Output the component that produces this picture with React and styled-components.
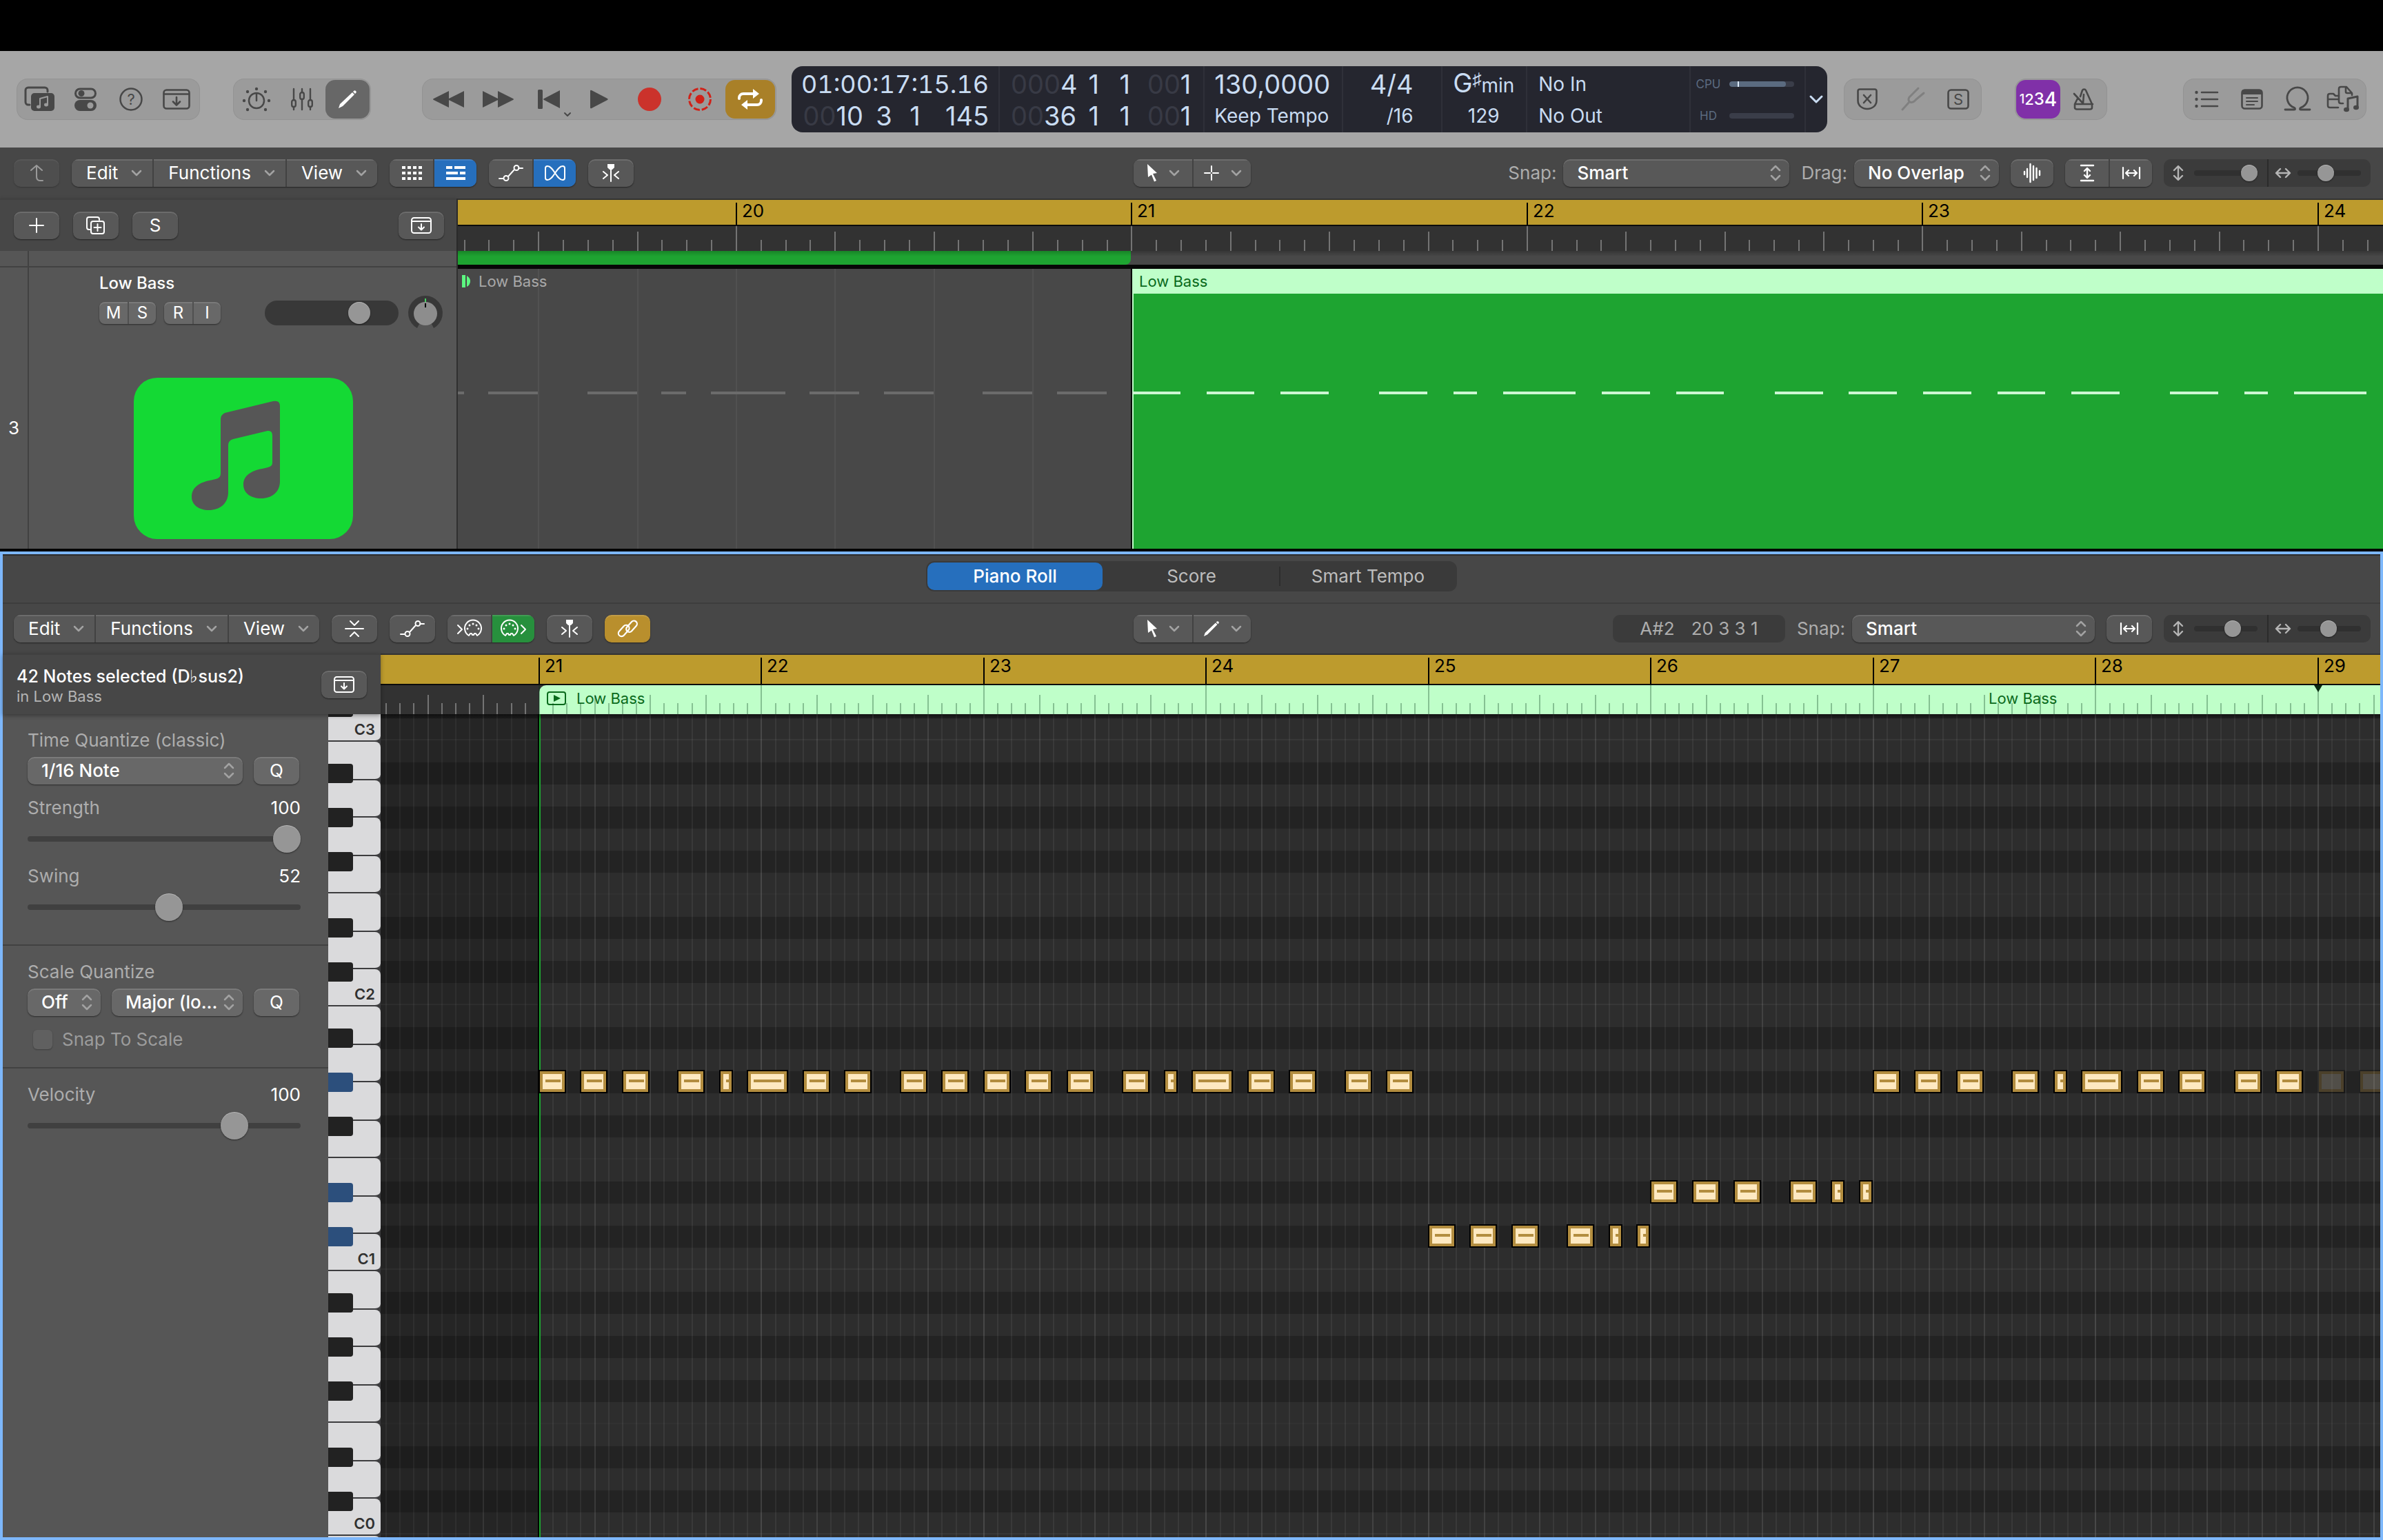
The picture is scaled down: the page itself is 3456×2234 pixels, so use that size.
import React from 'react'
import styled, { createGlobalStyle, css } from 'styled-components'

const GlobalStyle = createGlobalStyle`
*{
    box-sizing: border-box;
}
html, body{
    margin: 0;
    background: #000000;
}
body, button, input, select{
    font-family: Inter, 'Liberation Sans', sans-serif;
    font-size: 26px;
    line-height: 32px;
}
button, select, input{
    margin: 0;
    padding: 0;
    border: none;
    color: inherit;
}
`

/* ---------- song data, positions counted in sixteenths from bar 21 ---------- */

const RIFF = [
  [0, 2], [3, 2], [6, 2], [10, 2], [13, 1], [15, 3], [19, 2], [22, 2], [26, 2], [29, 2],
  [32, 2], [35, 2], [38, 2], [42, 2], [45, 1], [47, 3], [51, 2], [54, 2], [58, 2], [61, 2],
]
const TURN = [[0, 2], [3, 2], [6, 2], [10, 2], [13, 1], [15, 1]]

const shift = (list, by) => list.map(([start, length]) => [start + by, length])

const ROW = 32
const OCTAVE = 384
const SCROLL = 346
const rowTop = (octave, step) => (3 - octave) * OCTAVE + (11 - step) * ROW

const NOTES = [
  { top: rowTop(1, 8), items: [...RIFF, ...shift(RIFF.slice(0, 10), 96)] },
  { top: rowTop(1, 1), items: shift(TURN, 64) },
  { top: rowTop(1, 3), items: shift(TURN, 80) },
  { top: rowTop(1, 8), muted: true, items: shift(RIFF.slice(0, 2), 128) },
]

const TRACK_VIEW = { origin: 976.4, bar: 573.5, from: -27, to: 51 }
const ROLL_VIEW = { origin: 228.9, bar: 322.5, from: -11, to: 132 }

const at = (view, sixteenth) => Math.round(view.origin + (sixteenth * view.bar) / 16)
const range = (from, to) => Array.from({ length: to - from + 1 }, (_, i) => from + i)

/* ---------- icons ---------- */

const Svg = styled.svg`
display: block;
flex: none;
fill: none;
stroke: currentColor;
stroke-width: ${p => p.$weight || 2};
stroke-linecap: round;
stroke-linejoin: round;
overflow: visible;
text{
    fill: currentColor;
    stroke: none;
    font-size: 22px;
    text-anchor: middle;
}
.solid{
    fill: currentColor;
    stroke: none;
}
`

const Icon = ({ w, h, weight, children }) => (
  <Svg width={w} height={h} viewBox={`0 0 ${w} ${h}`} $weight={weight} aria-hidden="true">{children}</Svg>
)

const LibraryIcon = () => (
  <Icon w={44} h={36} weight={3}>
    <path d="M7 26H5a4 4 0 0 1-4-4V5a4 4 0 0 1 4-4h24a4 4 0 0 1 4 4v2" />
    <rect className="solid" x="9" y="9" width="34" height="26" rx="5" />
    <path d="M22 29V17l11-3v12" stroke="#9b9b9b" strokeWidth="2" />
    <ellipse cx="20" cy="29" rx="3" ry="2.4" fill="#9b9b9b" stroke="none" />
    <ellipse cx="31" cy="26" rx="3" ry="2.4" fill="#9b9b9b" stroke="none" />
  </Icon>
)
const InspectorIcon = () => (
  <Icon w={32} h={34} weight={3}>
    <rect x="1.5" y="2" width="29" height="13" rx="6.5" />
    <circle className="solid" cx="10" cy="8.5" r="4.5" />
    <rect className="solid" x="0" y="18" width="32" height="16" rx="8" />
    <circle cx="23" cy="26" r="4.5" fill="#9b9b9b" stroke="none" />
  </Icon>
)
const HelpIcon = () => (
  <Icon w={34} h={34} weight={2.5}>
    <circle cx="17" cy="17" r="15.5" />
    <text x="17" y="25">?</text>
  </Icon>
)
const TrayIcon = () => (
  <Icon w={40} h={30} weight={2.6}>
    <rect x="1.5" y="1.5" width="37" height="27" rx="4" />
    <path d="M2 7.5h36M20 12v11M15 18.5l5 5 5-5" />
  </Icon>
)
const TrayDownIcon = () => (
  <Icon w={30} h={24}>
    <rect x="1" y="1" width="28" height="22" rx="3.5" />
    <path d="M1 6h28M15 10v8M11 14.5l4 4 4-4" />
  </Icon>
)
const DialIcon = () => (
  <Icon w={40} h={34} weight={2.5}>
    <circle cx="20" cy="19" r="11" />
    <path d="M20 9v10" />
    {[[20, 2], [7, 6], [33, 6], [2, 19], [38, 19], [7, 32], [33, 32]].map(([x, y]) => (
      <circle key={`${x}-${y}`} className="solid" cx={x} cy={y} r="2.2" />
    ))}
  </Icon>
)
const MixerIcon = () => (
  <Icon w={32} h={32} weight={2.4}>
    <path d="M4 1v16M4 27v4M16 1v5M16 16v15M28 1v16M28 27v4" />
    <rect x="1.2" y="17" width="5.6" height="10" rx="2.8" />
    <rect x="13.2" y="6" width="5.6" height="10" rx="2.8" />
    <rect x="25.2" y="17" width="5.6" height="10" rx="2.8" />
  </Icon>
)
const PencilIcon = ({ size = 26 }) => (
  <Svg width={size} height={size} viewBox="0 0 26 26" aria-hidden="true">
    <path className="solid" d="M0 26l2-6L20 3l3 3L6 23zM21 2l1-1c1-1 2-1 3 0s1 2 0 3l-1 1z" />
  </Svg>
)
const RewindIcon = () => (
  <Icon w={46} h={26}><path className="solid" d="M24 1v24L2 14q-2-1 0-2zM46 1v24L24 14q-2-1 0-2z" /></Icon>
)
const ForwardIcon = () => (
  <Icon w={46} h={26}><path className="solid" d="M0 1v24l22-11q2-1 0-2zM22 1v24l22-11q2-1 0-2z" /></Icon>
)
const ToStartIcon = () => (
  <Icon w={32} h={28}>
    <path className="solid" d="M0 1.5Q0 0 1.5 0h4Q7 0 7 1.5v25Q7 28 5.5 28h-4Q0 28 0 26.5zM32 1v26L9 15q-2-1 0-2z" />
    <path d="M39 34l4 4 4-4" />
  </Icon>
)
const PlayIcon = () => (
  <Icon w={26} h={28}><path className="solid" d="M0 2Q0 0 2 1l23 12q1.5 1 0 2L2 27q-2 1-2-1z" /></Icon>
)
const RecordIcon = () => (
  <Icon w={34} h={34}><circle cx="17" cy="17" r="17" fill="#cb322b" stroke="none" /></Icon>
)
const CaptureIcon = () => (
  <Icon w={34} h={34}>
    <circle cx="17" cy="17" r="15.5" stroke="#d02118" strokeWidth="3" strokeLinecap="butt" strokeDasharray="9.17 3" />
    <circle cx="17" cy="17" r="6.5" fill="#d02118" stroke="none" />
  </Icon>
)
const CycleIcon = () => (
  <Icon w={36} h={30} weight={4}>
    <path d="M2 14v-1a6 6 0 0 1 6-6h16M34 16v1a6 6 0 0 1-6 6H12" />
    <path className="solid" d="M22 0l9 7-9 7zM14 16l-9 7 9 7z" />
  </Icon>
)
const ShieldIcon = () => (
  <Icon w={30} h={32} weight={2.6}>
    <path d="M4 1.5h22a2.5 2.5 0 0 1 2.5 2.5v14c0 7-6 12-13.5 12S1.5 25 1.5 18V4A2.5 2.5 0 0 1 4 1.5zM10 10l10 11M20 10L10 21" />
  </Icon>
)
const ForkIcon = () => (
  <Icon w={36} h={34} weight={3}>
    <path d="M26 1L13 14c-2 3-1 6 1 7 3 1 6 0 8-3L34 8M12 22L3 32" />
  </Icon>
)
const SoloIcon = () => (
  <Icon w={32} h={30} weight={2.6}>
    <rect x="1.5" y="1.5" width="29" height="27" rx="4" />
    <text x="16" y="23">S</text>
  </Icon>
)
const MetronomeIcon = () => (
  <Icon w={32} h={32} weight={2.6}>
    <path d="M11 12l3-9c1-2 4-2 5 0l9 20v5q0 2.5-3 2.5H6Q3 30.5 3 28v-5l4-8M3 23h26M2 8l13 14 1-13" />
  </Icon>
)
const ListIcon = () => (
  <Icon w={34} h={24} weight={2.6}>
    <path d="M10 2h23M10 12h23M10 22h23" />
    <circle className="solid" cx="2.5" cy="2" r="2.2" />
    <circle className="solid" cx="2.5" cy="12" r="2.2" />
    <circle className="solid" cx="2.5" cy="22" r="2.2" />
  </Icon>
)
const NotepadIcon = () => (
  <Icon w={32} h={30} weight={2.6}>
    <rect x="1.5" y="1.5" width="29" height="27" rx="4" />
    <path className="solid" d="M1 8V4q0-3 4-3h22q4 0 4 3v4z" />
    <path d="M8 13h16M8 18h16M8 23h11" strokeWidth="2" />
  </Icon>
)
const LoopIcon = () => (
  <Icon w={38} h={34} weight={2.8}>
    <path d="M1 32h13M24 32h13M14 32c2 0 2-2 0-3A15 15 0 1 1 24 29c-2 1-2 3 0 3" />
  </Icon>
)
const MediaIcon = () => (
  <Icon w={46} h={38} weight={2.6}>
    <path d="M16 31H4q-3 0-3-3V14q0-3 3-3h5l3 3h5M1 19h15" />
    <path d="M17 22V4q0-3 3-3h8l8 9v3M27 2v6q0 2 2 2h6M17 22q0 3 3 3h3" />
    <path d="M30 33V18l14-3v15" strokeWidth="3" />
    <ellipse className="solid" cx="28" cy="34" rx="4" ry="3.2" />
    <ellipse className="solid" cx="42" cy="31" rx="4" ry="3.2" />
  </Icon>
)
const ChevronIcon = () => <Icon w={14} h={8} weight={2.5}><path d="M1 1l6 6 6-6" /></Icon>
const LcdChevronIcon = () => <Icon w={18} h={10} weight={3}><path d="M1 1l8 8 8-8" /></Icon>
const StepperIcon = () => <Icon w={14} h={22} weight={2.5}><path d="M1 7l6-6 6 6M1 15l6 6 6-6" /></Icon>
const UpIcon = () => <Icon w={20} h={24}><path d="M2 8l8-7 8 7M10 1v16q0 6 5 6h4" /></Icon>
const GridIcon = () => (
  <Icon w={28} h={20}>
    {[0, 8, 16].map(y => [0, 8, 16, 24].map(x => (
      <rect key={`${x}-${y}`} className="solid" x={x} y={y} width="5" height="4" />
    )))}
  </Icon>
)
const LanesIcon = () => (
  <Icon w={28} h={20}>
    <path className="solid" d="M0 0h9v4H0zM12 0h16v4H12zM0 8h17v4H0zM20 8h8v4h-8zM0 16h28v4H0z" />
  </Icon>
)
const AutomationIcon = () => (
  <Icon w={34} h={22}>
    <path d="M0 19h6M13 16L22 6M28 4h6" />
    <circle cx="10" cy="18.5" r="3.5" />
    <circle cx="25" cy="3.5" r="3.5" />
  </Icon>
)
const FlexIcon = () => (
  <Icon w={30} h={22}>
    <path d="M4 1C13 1 17 21 26 21q3 0 3-3V4q0-3-3-3C17 1 13 21 4 21q-3 0-3-3V4q0-3 3-3z" />
  </Icon>
)
const CatchIcon = () => (
  <Icon w={26} h={26}>
    <path className="solid" d="M8 0h10v5l-3 3h-4l-3-3z" />
    <path d="M13 7v18M2 11l6 5-6 5M24 11l-6 5 6 5" />
  </Icon>
)
const PointerIcon = () => (
  <Icon w={16} h={26}><path className="solid" d="M0 0l14 13-6 1 5 10-3 1.5-4-10L1 19z" /></Icon>
)
const CrossIcon = () => <Icon w={22} h={22}><path d="M11 1v8M11 13v8M1 11h8M13 11h8" /></Icon>
const WaveIcon = () => (
  <Icon w={26} h={28} weight={2.4}><path d="M2 12v4M6 8v12M10.5 1v26M15 4v20M19.5 7v14M24 11v6" /></Icon>
)
const FitHeightIcon = () => (
  <Icon w={20} h={24} weight={2.4}><path d="M1 1h18M1 23h18M10 6v12M6 9l4-4 4 4M6 15l4 4 4-4" /></Icon>
)
const FitWidthIcon = () => (
  <Icon w={26} h={18} weight={2.2}><path d="M1 1v16M25 1v16M6 9h14M9 5L5 9l4 4M17 5l4 4-4 4" /></Icon>
)
const UpDownIcon = () => (
  <Icon w={14} h={22} weight={2.4}><path d="M7 2v18M1 7l6-6 6 6M1 15l6 6 6-6" /></Icon>
)
const LeftRightIcon = () => (
  <Icon w={22} h={14} weight={2.4}><path d="M2 7h18M7 1L1 7l6 6M15 1l6 6-6 6" /></Icon>
)
const PlusIcon = () => <Icon w={20} h={20}><path d="M10 0v20M0 10h20" /></Icon>
const DuplicateIcon = () => (
  <Icon w={28} h={26}>
    <path d="M6 19H4q-3 0-3-3V4q0-3 3-3h12q3 0 3 3v1" />
    <rect x="7" y="7" width="19" height="18" rx="3" />
    <path d="M16.5 11v10M11.5 16h10" />
  </Icon>
)
const CollapseIcon = () => (
  <Icon w={26} h={24}><path d="M7 1l6 6 6-6M0 12h26M7 23l6-6 6 6" /></Icon>
)
const MidiPlug = ({ x }) => (
  <>
    <path d={`M${x + 7} 22a12 12 0 1 1 12 0l-2-3h-2l-1 2h-2l-1-2h-2z`} />
    {[[5, 12], [8, 7], [13, 5], [18, 7], [21, 12]].map(([cx, cy]) => (
      <circle key={cx} className="solid" cx={x + cx} cy={cy} r="1.5" />
    ))}
  </>
)
const MidiInIcon = () => (
  <Icon w={38} h={24}><MidiPlug x={11} /><path d="M2 7l6 6-6 6" /></Icon>
)
const MidiOutIcon = () => (
  <Icon w={38} h={24}><MidiPlug x={0} /><path d="M30 7l6 6-6 6" /></Icon>
)
const LinkIcon = () => (
  <Icon w={28} h={28} weight={2.2}>
    <rect x="-1" y="13" width="19" height="9" rx="4.5" transform="rotate(-48 8 17)" />
    <rect x="10" y="6" width="19" height="9" rx="4.5" transform="rotate(-48 20 10)" />
  </Icon>
)
const RegionPlayIcon = () => (
  <Icon w={28} h={20}>
    <rect x="1" y="1" width="26" height="18" rx="3" />
    <path className="solid" d="M10 5l10 5-10 5z" />
  </Icon>
)
const PanKnob = () => (
  <Icon w={50} h={50}>
    <path d="M13 47A25 25 0 1 1 37 47L33 39H17z" fill="#383838" stroke="none" />
    <circle cx="25" cy="26" r="17" fill="#8d8d8d" stroke="none" />
    <path d="M25 4v5" stroke="#45d463" strokeLinecap="butt" />
    <path d="M25 11v6" stroke="#000000" strokeLinecap="butt" />
  </Icon>
)
const MutedMark = () => (
  <Icon w={12} h={18}>
    <path d="M0 0h5v18H0zM7 1q5 3 5 8t-5 8z" fill="#5cf780" stroke="none" />
  </Icon>
)

/* ---------- shared controls ---------- */

const raised = css`
box-shadow: inset 0 2px 0 rgba(255, 255, 255, 0.12), 0 1px 2px rgba(0, 0, 0, 0.5);
`

const Tool = styled.button`
display: flex;
align-items: center;
justify-content: center;
flex: none;
gap: ${p => p.$gap || 0}px;
width: ${p => p.$width || 66}px;
height: 40px;
border-radius: 10px;
color: #ffffff;
background: ${p => p.$fill || '#585858'};
opacity: ${p => (p.disabled ? 0.45 : 1)};
${raised}
`

const Segments = styled.div`
display: flex;
flex: none;
border-radius: 10px;
overflow: hidden;
background: #585858;
${raised}
${Tool}{
    border-radius: 0;
    box-shadow: inset 0 2px 0 rgba(255, 255, 255, 0.12);
}
${Tool} + ${Tool}{
    border-left: 2px solid #424242;
}
`

const Chevron = styled.span`
display: flex;
color: #a2a2a2;
`

const MenuTool = styled(Tool)`
width: auto;
gap: 20px;
padding: 0 16px 0 21px;
justify-content: space-between;
`

const SelectBox = styled.span`
position: relative;
display: block;
flex: none;
width: ${p => p.$width}px;
height: 40px;
border-radius: 10px;
color: #a2a2a2;
background: ${p => (p.$light ? '#686868' : '#585858')};
${raised}
select{
    appearance: none;
    display: block;
    width: 100%;
    height: 40px;
    padding: 0 32px 0 20px;
    background: none;
    color: #ffffff;
    font-weight: 500;
}
svg{
    position: absolute;
    right: 13px;
    top: 9px;
    pointer-events: none;
}
`

const FieldLabel = styled.label`
color: #adadad;
`

const Slider = styled.input.attrs({ type: 'range' })`
appearance: none;
display: block;
width: ${p => p.$width || '100%'};
height: ${p => p.$knob}px;
background: none;
&::-webkit-slider-runnable-track{
    height: 8px;
    border-radius: 4px;
    background: ${p => p.$track || '#404040'};
}
&::-webkit-slider-thumb{
    appearance: none;
    width: ${p => p.$knob}px;
    height: ${p => p.$knob}px;
    margin-top: ${p => (8 - p.$knob) / 2}px;
    border-radius: 50%;
    background: #969696;
    box-shadow: inset 0 1px 0 rgba(255, 255, 255, 0.3), 0 1px 2px rgba(0, 0, 0, 0.5);
}
`

const Zoom = styled.div`
display: flex;
align-items: center;
height: 40px;
border-radius: 10px;
background: #3b3b3b;
color: #b5b5b5;
`

const ZoomAxis = styled.label`
display: flex;
align-items: center;
justify-content: space-between;
width: 150px;
height: 40px;
padding: 0 14px;
& + &{
    border-left: 2px solid #2b2b2b;
    padding-left: 10px;
}
`

const Select = ({ id, width, light, label, children }) => (
  <SelectBox $width={width} $light={light}>
    <select id={id} aria-label={label}><option>{children}</option></select>
    <StepperIcon />
  </SelectBox>
)

const Menus = () => (
  <Segments>
    {['Edit', 'Functions', 'View'].map(name => (
      <MenuTool key={name}>{name}<Chevron><ChevronIcon /></Chevron></MenuTool>
    ))}
  </Segments>
)

const ToolPicker = ({ second }) => (
  <Segments>
    <Tool $width={85} $gap={16} aria-label="Left-click tool"><PointerIcon /><Chevron><ChevronIcon /></Chevron></Tool>
    <Tool $width={85} $gap={18} aria-label="Command-click tool">{second}<Chevron><ChevronIcon /></Chevron></Tool>
  </Segments>
)

const ZoomSliders = ({ vertical, horizontal }) => (
  <Zoom>
    <ZoomAxis><UpDownIcon /><Slider $knob={24} $width="92px" $track="#303030" aria-label="Vertical zoom" defaultValue={vertical} /></ZoomAxis>
    <ZoomAxis><LeftRightIcon /><Slider $knob={24} $width="92px" $track="#303030" aria-label="Horizontal zoom" defaultValue={horizontal} /></ZoomAxis>
  </Zoom>
)

/* ---------- control bar ---------- */

const Page = styled.div`
display: flex;
flex-direction: column;
height: 100vh;
overflow: hidden;
background: #000000;
color: #ffffff;
`

const MenuBarGap = styled.div`
flex: none;
height: 74px;
`

const ControlBar = styled.header`
display: flex;
align-items: center;
flex: none;
height: 140px;
padding: 0 24px;
background: #a6a6a6;
color: #484848;
`

const Cluster = styled.div`
display: flex;
gap: ${p => p.$gap || 2}px;
flex: none;
padding: 2px;
height: 60px;
border-radius: 16px;
background: #9b9b9b;
box-shadow: inset 0 0 0 1px rgba(0, 0, 0, 0.05);
margin-left: ${p => p.$before || 0}px;
`

const Push = styled.div`
flex: none;
margin-left: auto;
`

const BarButton = styled.button`
display: flex;
align-items: center;
justify-content: center;
width: ${p => p.$width || 64}px;
height: 56px;
border-radius: 14px;
background: ${p => p.$fill || 'none'};
color: ${p => (p.$fill ? '#ffffff' : p.$faint ? '#808080' : '#484848')};
`

const CountIn = styled.span`
display: flex;
align-items: center;
font-weight: 500;
font-size: 18px;
b{
    font-weight: 500;
    font-size: 22px;
}
i{
    font-style: normal;
    font-size: 24px;
}
strong{
    font-weight: 500;
    font-size: 28px;
}
`

const Lcd = styled.section`
display: grid;
grid-template-columns: 297fr 298fr 201fr 145fr 123fr 237fr 168fr 33fr;
flex: 1;
height: 96px;
margin: 0 24px 0 22px;
border-radius: 16px;
background: #25262f;
color: #c9dcf2;
`

const LcdCell = styled.div`
display: grid;
grid-template-rows: 46px 46px;
align-items: center;
justify-items: ${p => p.$align || 'start'};
padding: 3px ${p => p.$pad || 0}px 0;
line-height: 46px;
white-space: nowrap;
& + &{
    box-shadow: inset 2px 0 0 #2f3039;
}
`

const LcdToggle = styled.button`
display: flex;
align-items: center;
justify-content: center;
background: none;
box-shadow: inset 2px 0 0 #2f3039;
`

const Digits = styled.span`
font-size: 38px;
`

const Clock = styled.span`
font-size: 36px;
font-variant-numeric: tabular-nums;
`

const LcdText = styled.span`
font-size: 28px;
padding-left: ${p => (p.$shift ? 24 : 0)}px;
sup{
    font-size: 26px;
    line-height: 0;
}
`

const Position = styled.div`
display: grid;
grid-template-columns: 90px 60px 30px 1fr;
width: 100%;
font-size: 38px;
text-align: center;
span:first-child{
    text-align: right;
}
span:last-child{
    text-align: right;
}
em{
    font-style: normal;
    color: #383a45;
}
`

const Load = styled.div`
display: grid;
grid-template-columns: 36px 94px;
align-items: center;
gap: 12px;
font-size: 17px;
color: #5c6b80;
text-align: center;
`

const Meter = styled.div`
height: 8px;
border-radius: 4px;
overflow: hidden;
background: #3a3d49;
`

const MeterFill = styled.div`
height: 8px;
border-radius: 4px;
background: linear-gradient(90deg, #5b6b80 12px, #dbe9f7 12px, #dbe9f7 14px, #5b6b80 14px);
`

const SongPosition = ({ bar, beat, division, tick }) => (
  <Position>
    <span><em>{bar[0]}</em>{bar[1]}</span>
    <span>{beat}</span>
    <span>{division}</span>
    <span><em>{tick[0]}</em>{tick[1]}</span>
  </Position>
)

const Controls = () => (
  <ControlBar>
    <Cluster>
      <BarButton aria-label="Library"><LibraryIcon /></BarButton>
      <BarButton aria-label="Inspector"><InspectorIcon /></BarButton>
      <BarButton aria-label="Quick Help"><HelpIcon /></BarButton>
      <BarButton aria-label="Toolbar"><TrayIcon /></BarButton>
    </Cluster>
    <Cluster $before={48}>
      <BarButton aria-label="Smart Controls"><DialIcon /></BarButton>
      <BarButton aria-label="Mixer"><MixerIcon /></BarButton>
      <BarButton aria-label="Editors" $fill="#676767"><PencilIcon /></BarButton>
    </Cluster>
    <Cluster $before={74} $gap={1}>
      <BarButton $width={72} aria-label="Rewind"><RewindIcon /></BarButton>
      <BarButton $width={72} aria-label="Forward"><ForwardIcon /></BarButton>
      <BarButton $width={72} aria-label="Go to Beginning"><ToStartIcon /></BarButton>
      <BarButton $width={72} aria-label="Play"><PlayIcon /></BarButton>
      <BarButton $width={72} aria-label="Record"><RecordIcon /></BarButton>
      <BarButton $width={72} aria-label="Capture Recording"><CaptureIcon /></BarButton>
      <BarButton $width={72} aria-label="Cycle" $fill="#a98028"><CycleIcon /></BarButton>
    </Cluster>

    <Lcd>
      <LcdCell $pad={14}>
        <Clock>01:00:17:15.16</Clock>
        <SongPosition bar={['00', '10']} beat="3" division="1" tick={['', '145']} />
      </LcdCell>
      <LcdCell $pad={18}>
        <SongPosition bar={['000', '4']} beat="1" division="1" tick={['00', '1']} />
        <SongPosition bar={['00', '36']} beat="1" division="1" tick={['00', '1']} />
      </LcdCell>
      <LcdCell $pad={16}>
        <Digits>130,0000</Digits>
        <LcdText>Keep Tempo</LcdText>
      </LcdCell>
      <LcdCell $align="center">
        <Digits>4/4</Digits>
        <LcdText $shift>/16</LcdText>
      </LcdCell>
      <LcdCell $align="center">
        <LcdText><Digits>G</Digits><sup>♯</sup>min</LcdText>
        <LcdText>129</LcdText>
      </LcdCell>
      <LcdCell $pad={18}>
        <LcdText>No In</LcdText>
        <LcdText>No Out</LcdText>
      </LcdCell>
      <LcdCell $pad={10}>
        <Load>CPU<Meter><MeterFill style={{ width: '88%' }} /></Meter></Load>
        <Load>HD<Meter /></Load>
      </LcdCell>
      <LcdToggle aria-label="Display mode"><LcdChevronIcon /></LcdToggle>
    </Lcd>

    <Cluster>
      <BarButton aria-label="Replace"><ShieldIcon /></BarButton>
      <BarButton aria-label="Tuner" $faint><ForkIcon /></BarButton>
      <BarButton aria-label="Solo"><SoloIcon /></BarButton>
    </Cluster>
    <Cluster $before={48}>
      <BarButton $fill="#8030a8"><CountIn>1<b>2</b><i>3</i><strong>4</strong></CountIn></BarButton>
      <BarButton aria-label="Metronome"><MetronomeIcon /></BarButton>
    </Cluster>
    <Cluster $before={110}>
      <BarButton aria-label="List Editors"><ListIcon /></BarButton>
      <BarButton aria-label="Note Pads"><NotepadIcon /></BarButton>
      <BarButton aria-label="Loop Browser"><LoopIcon /></BarButton>
      <BarButton aria-label="Browsers"><MediaIcon /></BarButton>
    </Cluster>
  </ControlBar>
)

/* ---------- toolbars and rulers ---------- */

const Toolbar = styled.div`
display: grid;
grid-template-columns: 1fr auto 1fr;
align-items: center;
flex: none;
height: ${p => p.$height}px;
padding: ${p => (p.$inset ? '0 14px 0 16px' : '0 18px 0 20px')};
background: #474747;
`

const ToolGroup = styled.div`
display: flex;
align-items: center;
gap: ${p => (p.$end ? 17 : 18)}px;
justify-content: ${p => (p.$end ? 'flex-end' : 'flex-start')};
`

const Labelled = styled.div`
display: flex;
align-items: center;
gap: 10px;
`

const Ruler = styled.div`
position: relative;
overflow: hidden;
height: ${p => p.$cycle + p.$ticks + 4}px;
border-top: 2px solid #333333;
background: linear-gradient(#bd9b2d ${p => p.$cycle}px, #0c0c0c ${p => p.$cycle}px, #0c0c0c ${p => p.$cycle + 2}px, #323232 ${p => p.$cycle + 2}px);
`

const BarMark = styled.span`
position: absolute;
top: 4px;
height: ${p => p.$cycle - 4}px;
padding-left: 7px;
border-left: 2px solid #000000;
color: #000000;
line-height: 24px;
`

const Tick = styled.span`
position: absolute;
bottom: 0;
width: 2px;
height: ${p => p.$height}px;
background: ${p => (p.$onRegion ? 'rgba(0, 50, 20, 0.3)' : '#747474')};
`

const Timeline = ({ view, cycle, ticks, bars, regionFrom, children }) => (
  <Ruler $cycle={cycle} $ticks={ticks}>
    {children}
    {range(view.from, view.to).map(n => (
      <Tick
        key={n}
        $height={n % 16 === 0 ? ticks : n % 4 === 0 ? 28 : 16}
        $onRegion={n >= regionFrom}
        style={{ left: at(view, n) }}
      />
    ))}
    {bars.map(bar => (
      <BarMark key={bar} $cycle={cycle} style={{ left: at(view, (bar - 21) * 16) }}>{bar}</BarMark>
    ))}
  </Ruler>
)

const GridLine = styled.span`
position: absolute;
top: 0;
bottom: 0;
width: 2px;
background: rgba(255, 255, 255, ${p => p.$alpha});
`

/* ---------- tracks area ---------- */

const Tracks = styled.main`
display: grid;
grid-template-columns: 664px 1fr;
flex: none;
`

const TrackSide = styled.div`
border-right: 2px solid #303030;
background: #565656;
`

const TrackSideBar = styled.div`
display: flex;
align-items: center;
gap: 20px;
height: 76px;
padding: 0 18px 0 20px;
border-top: 2px solid #404040;
background: #474747;
box-shadow: 0 2px 6px rgba(0, 0, 0, 0.3);
`

const TrackStub = styled.div`
height: 24px;
border-bottom: 2px solid #424242;
background: linear-gradient(90deg, #565656 40px, #424242 40px, #424242 42px, #565656 42px);
`

const Track = styled.div`
display: grid;
grid-template-columns: 42px 1fr;
height: 408px;
`

const TrackNumber = styled.div`
display: flex;
align-items: center;
justify-content: center;
padding-top: 58px;
border-right: 2px solid #424242;
`

const TrackBody = styled.div`
padding: 6px 20px 0 102px;
`

const TrackName = styled.div`
font-size: 24px;
font-weight: 500;
line-height: 34px;
`

const TrackControls = styled.div`
display: flex;
align-items: center;
height: 52px;
`

const MiniPair = styled.div`
display: flex;
margin-right: 12px;
border-radius: 8px;
overflow: hidden;
background: #686868;
${raised}
`

const MiniButton = styled.button`
width: 41px;
height: 32px;
background: none;
font-size: 24px;
& + &{
    border-left: 2px solid #505050;
}
`

const Volume = styled(Slider)`
width: 194px;
height: 36px;
margin: 0 14px 0 auto;
padding: 0 2px;
border-radius: 18px;
background: #383838;
&::-webkit-slider-runnable-track{
    background: none;
}
`

const TrackIcon = styled.div`
display: flex;
width: 318px;
height: 234px;
margin: 68px 0 0 50px;
border-radius: 34px;
background: #14d934;
color: #565656;
`

const Arrangement = styled.div`
min-width: 0;
`

const OverviewLane = styled.div`
height: 26px;
border-bottom: 6px solid #080808;
background: linear-gradient(rgba(0, 0, 0, 0.25), rgba(0, 0, 0, 0) 8px), #484848;
`

const OverviewRegion = styled.div`
height: 20px;
border-radius: 0 0 8px 0;
background: linear-gradient(rgba(0, 0, 0, 0.2), rgba(0, 0, 0, 0) 8px), #1ea431;
`

const Lane = styled.div`
position: relative;
height: 406px;
overflow: hidden;
background: #484848;
`

const Region = styled.div`
position: absolute;
top: 0;
bottom: 0;
right: 0;
border-left: 2px solid #000000;
background: #1ea431;
box-shadow: inset 2px 0 0 #bfffc9;
`

const RegionTitle = styled.div`
display: flex;
align-items: center;
gap: 12px;
height: 36px;
padding-left: 10px;
font-size: 22px;
color: ${p => (p.$muted ? '#a8a8a8' : '#0a6a1c')};
background: ${p => (p.$muted ? 'none' : '#bfffc9')};
`

const LoopTitle = styled(RegionTitle)`
position: relative;
padding-left: 6px;
`

const MiniNote = styled.span`
position: absolute;
top: 178px;
height: 4px;
background: ${p => (p.$muted ? '#6b6b6b' : '#cdf6d3')};
`

const TrackArea = () => (
  <>
    <Toolbar $height={74}>
      <ToolGroup>
        <Tool disabled aria-label="Up"><UpIcon /></Tool>
        <Menus />
        <Segments>
          <Tool $width={63} aria-label="Grid"><GridIcon /></Tool>
          <Tool $width={63} $fill="#266fbd" aria-label="Linear"><LanesIcon /></Tool>
        </Segments>
        <Segments>
          <Tool $width={63} aria-label="Automation"><AutomationIcon /></Tool>
          <Tool $width={63} $fill="#266fbd" aria-label="Flex"><FlexIcon /></Tool>
        </Segments>
        <Tool aria-label="Catch"><CatchIcon /></Tool>
      </ToolGroup>
      <ToolPicker second={<CrossIcon />} />
      <ToolGroup $end>
        <Labelled>
          <FieldLabel htmlFor="track-snap">Snap:</FieldLabel>
          <Select id="track-snap" width={328}>Smart</Select>
        </Labelled>
        <Labelled>
          <FieldLabel htmlFor="track-drag">Drag:</FieldLabel>
          <Select id="track-drag" width={210}>No Overlap</Select>
        </Labelled>
        <Tool $width={62} aria-label="Waveform zoom"><WaveIcon /></Tool>
        <Segments>
          <Tool $width={63} aria-label="Zoom to fit vertically"><FitHeightIcon /></Tool>
          <Tool $width={63} aria-label="Zoom to fit horizontally"><FitWidthIcon /></Tool>
        </Segments>
        <ZoomSliders vertical={100} horizontal={43} />
      </ToolGroup>
    </Toolbar>

    <Tracks>
      <TrackSide>
        <TrackSideBar>
          <Tool aria-label="Add track"><PlusIcon /></Tool>
          <Tool aria-label="Duplicate track"><DuplicateIcon /></Tool>
          <Tool>S</Tool>
          <Push><Tool aria-label="Track headers"><TrayDownIcon /></Tool></Push>
        </TrackSideBar>
        <TrackStub />
        <Track>
          <TrackNumber>3</TrackNumber>
          <TrackBody>
            <TrackName>Low Bass</TrackName>
            <TrackControls>
              <MiniPair><MiniButton>M</MiniButton><MiniButton>S</MiniButton></MiniPair>
              <MiniPair><MiniButton>R</MiniButton><MiniButton>I</MiniButton></MiniPair>
              <Volume $knob={32} aria-label="Volume" defaultValue={75} />
              <PanKnob />
            </TrackControls>
            <TrackIcon>
              <Icon w={318} h={234}>
                <path
                  className="solid"
                  d="M126 60q0-6 6-9l70-17q10-2 10 7v109c0 16-12 25-27 25-16 0-26-8-26-20 0-13 11-20 27-23 10-2 15-3 15-9V84q0-8-7-7l-50 12q-7 2-7 9v68c0 17-13 26-28 26-15 0-25-8-25-19 0-14 11-21 26-24 10-2 16-3 16-10z"
                />
              </Icon>
            </TrackIcon>
          </TrackBody>
        </Track>
      </TrackSide>

      <Arrangement>
        <Timeline view={TRACK_VIEW} cycle={36} ticks={36} bars={range(20, 24)} regionFrom={999} />
        <OverviewLane><OverviewRegion style={{ width: at(TRACK_VIEW, 0) }} /></OverviewLane>
        <Lane>
          {range(-6, 12).map(beat => (
            <GridLine key={beat} $alpha={0.05} style={{ left: at(TRACK_VIEW, beat * 4) }} />
          ))}
          <LoopTitle $muted><MutedMark />Low Bass</LoopTitle>
          {shift(RIFF.slice(11), -64).map(([start, length]) => (
            <MiniNote
              key={start}
              $muted
              style={{ left: at(TRACK_VIEW, start), width: at(TRACK_VIEW, start + length) - at(TRACK_VIEW, start) }}
            />
          ))}
          <Region style={{ left: at(TRACK_VIEW, 0) }}>
            <RegionTitle>Low Bass</RegionTitle>
            {RIFF.slice(0, 16).map(([start, length]) => (
              <MiniNote
                key={start}
                style={{ left: (start * TRACK_VIEW.bar) / 16, width: (length * TRACK_VIEW.bar) / 16 - 2 }}
              />
            ))}
          </Region>
        </Lane>
      </Arrangement>
    </Tracks>
  </>
)

/* ---------- piano roll ---------- */

const Editor = styled.section`
display: flex;
flex-direction: column;
flex: 1;
min-height: 0;
margin-top: 4px;
border: 4px solid #7db7fb;
background: #474747;
`

const TabRow = styled.div`
display: flex;
justify-content: center;
flex: none;
padding: 8px 0 16px;
border-top: 2px solid #2c2c2c;
border-bottom: 2px solid #3d3d3d;
`

const Tabs = styled.div`
display: flex;
align-items: center;
gap: 2px;
padding: 2px;
border-radius: 12px;
background: #3a3a3a;
`

const Tab = styled.button`
width: 254px;
height: 40px;
border-radius: 10px;
background: ${p => (p.$active ? '#266fbd' : 'none')};
color: ${p => (p.$active ? '#ffffff' : '#bdbdbd')};
font-weight: ${p => (p.$active ? 500 : 400)};
`

const TabDivider = styled.div`
width: 2px;
height: 28px;
margin: 0 -2px;
background: #2d2d2d;
`

const Readout = styled.div`
display: flex;
justify-content: center;
gap: 24px;
width: 250px;
height: 40px;
border-radius: 10px;
background: #3b3b3b;
color: #adadad;
line-height: 40px;
`

const Body = styled.div`
display: grid;
grid-template-columns: 472px 76px 1fr;
grid-template-rows: auto 1fr;
flex: 1;
min-height: 0;
`

const Selection = styled.div`
display: flex;
grid-column: span 2;
align-items: center;
justify-content: space-between;
height: 88px;
padding: 0 20px;
border-top: 2px solid #404040;
background: #474747;
z-index: 1;
box-shadow: 0 2px 6px rgba(0, 0, 0, 0.35);
`

const SelectionTitle = styled.h2`
margin: 0;
font-size: 25px;
font-weight: 500;
line-height: 34px;
`

const SelectionTrack = styled.p`
margin: 0;
font-size: 22px;
line-height: 24px;
color: #b5b5b5;
`

const Panel = styled.aside`
background: #565656;
`

const Section = styled.div`
padding: 22px 40px ${p => p.$bottom}px 36px;
& + &{
    border-top: 2px solid #424242;
}
`

const PanelRow = styled.div`
display: flex;
justify-content: space-between;
gap: 16px;
margin: 8px 0 18px;
padding-right: 2px;
`

const SliderHead = styled.div`
display: flex;
justify-content: space-between;
margin-bottom: 9px;
`

const SliderBlock = styled.div`
& + &{
    margin-top: 18px;
}
`

const Check = styled.label`
display: flex;
align-items: center;
gap: 14px;
padding-left: 8px;
color: #9c9c9c;
input{
    appearance: none;
    width: 28px;
    height: 28px;
    border-radius: 6px;
    background: #606060;
    box-shadow: 0 1px 2px rgba(0, 0, 0, 0.3);
}
`

const Keys = styled.div`
overflow: hidden;
background: #3c3c3e;
`

const Scrolled = styled.div`
margin-top: -${p => p.$by}px;
`

const KeyOctave = styled.div`
position: relative;
height: ${OCTAVE}px;
`

const WhiteKey = styled.div`
display: flex;
align-items: flex-end;
justify-content: flex-end;
height: ${p => p.$height}px;
padding-right: 8px;
border-bottom: 2px solid #3c3c3e;
border-radius: 0 8px 8px 0;
background: #dadadc;
color: #303030;
font-size: 22px;
font-weight: 600;
line-height: 32px;
`

const BlackKey = styled.div`
position: absolute;
left: 0;
width: 36px;
height: 28px;
border-radius: 0 4px 4px 0;
background: ${p => (p.$lit ? '#2c4f7c' : '#222222')};
`

const Roll = styled.div`
position: relative;
overflow: hidden;
background: #2d2d2d;
`

const GridOctave = styled.div`
height: ${OCTAVE}px;
`

const GridRow = styled.div`
height: ${ROW}px;
background: ${p => (p.$black ? '#232323' : '#2d2d2d')};
border-bottom: ${p => (p.$edge ? `2px solid ${p.$edge}` : 'none')};
`

const BeforeRegion = styled.div`
position: absolute;
top: 0;
bottom: 0;
left: 0;
border-right: 2px solid #000000;
background: rgba(0, 0, 0, 0.17);
`

const RegionEdge = styled.div`
position: absolute;
top: 0;
bottom: 0;
width: 2px;
background: #1ea431;
`

const TopShade = styled.div`
position: absolute;
top: 0;
left: 0;
right: 0;
height: 8px;
background: linear-gradient(rgba(0, 0, 0, 0.45), rgba(0, 0, 0, 0));
`

const Note = styled.div`
position: absolute;
height: 34px;
padding: 4px;
border: 2px solid #000000;
background: #b38d3f;
opacity: ${p => (p.$muted ? 0.28 : 1)};
`

const NoteFace = styled.div`
height: 22px;
padding: 8px 0 0 4px;
overflow: hidden;
background: ${p => (p.$muted ? '#c9bfa8' : '#fee9c1')};
`

const Velocity = styled.div`
height: 4px;
background: #b38d3f;
`

const RegionStrip = styled.div`
position: absolute;
right: 0;
bottom: 0;
height: 42px;
border-radius: 10px 0 0 0;
background: #bfffc9;
`

const StripTitle = styled.span`
position: absolute;
top: 0;
display: flex;
align-items: center;
gap: 15px;
height: 38px;
font-size: 22px;
color: #0a6a1c;
`

const LoopEnd = styled.span`
position: absolute;
top: 0;
border: 6px solid transparent;
border-top: 10px solid #0c2a12;
border-bottom: none;
`

const BLACK_STEPS = [1, 3, 6, 8, 10]
const WHITE_HEIGHTS = [56, 54, 56, 54, 56, 54, 54]
const LIT = ['1-8', '1-3', '1-1']

const Keyboard = () => (
  <Keys>
    <Scrolled $by={SCROLL - 2}>
      {[3, 2, 1, 0, -1].map(octave => (
        <KeyOctave key={octave}>
          {WHITE_HEIGHTS.map((height, i) => (
            <WhiteKey key={i} $height={height}>{i === 6 && octave >= 0 ? `C${octave}` : ''}</WhiteKey>
          ))}
          {BLACK_STEPS.map(step => (
            <BlackKey key={step} $lit={LIT.includes(`${octave}-${step}`)} style={{ top: (11 - step) * ROW }} />
          ))}
        </KeyOctave>
      ))}
    </Scrolled>
  </Keys>
)

const NoteGrid = () => (
  <Roll>
    <Scrolled $by={SCROLL}>
      {[3, 2, 1, 0, -1].map(octave => (
        <GridOctave key={octave}>
          {range(0, 11).reverse().map(step => (
            <GridRow
              key={step}
              $black={BLACK_STEPS.includes(step)}
              $edge={step === 0 ? '#373737' : step === 5 ? '#313131' : ''}
            />
          ))}
        </GridOctave>
      ))}
    </Scrolled>
    {range(ROLL_VIEW.from, ROLL_VIEW.to).map(n => (
      <GridLine
        key={n}
        $alpha={n % 16 === 0 ? 0.13 : n % 4 === 0 ? 0.1 : 0.06}
        style={{ left: at(ROLL_VIEW, n) }}
      />
    ))}
    <BeforeRegion style={{ width: at(ROLL_VIEW, 0) + 1 }} />
    <RegionEdge style={{ left: at(ROLL_VIEW, 0) + 1 }} />
    <TopShade />
    {NOTES.map(({ top, items, muted }) => items.map(([start, length]) => (
      <Note
        key={`${top}-${start}`}
        $muted={muted}
        style={{ top: top - SCROLL - 2, left: at(ROLL_VIEW, start), width: length * 20 }}
      >
        <NoteFace $muted={muted}>{!muted && <Velocity style={{ width: '90%' }} />}</NoteFace>
      </Note>
    )))}
  </Roll>
)

const PanelSlider = ({ id, label, value, max = 100 }) => (
  <SliderBlock>
    <SliderHead><FieldLabel htmlFor={id}>{label}</FieldLabel><span>{value}</span></SliderHead>
    <Slider id={id} $knob={40} max={max} defaultValue={value} />
  </SliderBlock>
)

const PianoRoll = () => (
  <Editor>
    <TabRow>
      <Tabs>
        <Tab $active>Piano Roll</Tab>
        <Tab>Score</Tab>
        <TabDivider />
        <Tab>Smart Tempo</Tab>
      </Tabs>
    </TabRow>
    <Toolbar $height={72} $inset>
      <ToolGroup>
        <Menus />
        <Tool aria-label="Collapse Mode"><CollapseIcon /></Tool>
        <Tool aria-label="Show Automation"><AutomationIcon /></Tool>
        <Segments>
          <Tool $width={63} aria-label="MIDI In"><MidiInIcon /></Tool>
          <Tool $width={63} $fill="#27903d" aria-label="MIDI Out"><MidiOutIcon /></Tool>
        </Segments>
        <Tool aria-label="Catch Playhead"><CatchIcon /></Tool>
        <Tool $fill="#b98f2d" aria-label="Link"><LinkIcon /></Tool>
      </ToolGroup>
      <ToolPicker second={<PencilIcon size={22} />} />
      <ToolGroup $end>
        <Readout><span>A#2</span><span>20 3 3 1</span></Readout>
        <Labelled>
          <FieldLabel htmlFor="roll-snap">Snap:</FieldLabel>
          <Select id="roll-snap" width={352}>Smart</Select>
        </Labelled>
        <Tool aria-label="Zoom to fit"><FitWidthIcon /></Tool>
        <ZoomSliders vertical={65} horizontal={49} />
      </ToolGroup>
    </Toolbar>

    <Body>
      <Selection>
        <div>
          <SelectionTitle>42 Notes selected (D♭sus2)</SelectionTitle>
          <SelectionTrack>in Low Bass</SelectionTrack>
        </div>
        <Tool aria-label="Local inspector"><TrayDownIcon /></Tool>
      </Selection>
      <Timeline view={ROLL_VIEW} cycle={42} ticks={42} bars={range(21, 29)} regionFrom={0}>
        <RegionStrip style={{ left: at(ROLL_VIEW, 0) + 1 }}>
          <StripTitle style={{ left: 11 }}><RegionPlayIcon />Low Bass</StripTitle>
          <StripTitle style={{ left: 2102 }}>Low Bass</StripTitle>
          <LoopEnd style={{ left: 8 * ROLL_VIEW.bar - 6 }} />
        </RegionStrip>
      </Timeline>
      <Panel>
        <Section $bottom={34}>
          <FieldLabel htmlFor="time-quantize">Time Quantize (classic)</FieldLabel>
          <PanelRow>
            <Select id="time-quantize" width={312} light>1/16 Note</Select>
            <Tool $fill="#686868">Q</Tool>
          </PanelRow>
          <PanelSlider id="strength" label="Strength" value={100} />
          <PanelSlider id="swing" label="Swing" value={52} />
        </Section>
        <Section $bottom={24}>
          <FieldLabel htmlFor="scale-root">Scale Quantize</FieldLabel>
          <PanelRow>
            <Select id="scale-root" width={106} light>Off</Select>
            <Select label="Scale" width={190} light>Major (lo...</Select>
            <Tool $fill="#686868">Q</Tool>
          </PanelRow>
          <Check><input type="checkbox" disabled />Snap To Scale</Check>
        </Section>
        <Section $bottom={24}>
          <PanelSlider id="velocity" label="Velocity" value={100} max={127} />
        </Section>
      </Panel>
      <Keyboard />
      <NoteGrid />
    </Body>
  </Editor>
)

const App = () => (
  <Page>
    <GlobalStyle />
    <MenuBarGap />
    <Controls />
    <TrackArea />
    <PianoRoll />
  </Page>
)

export default App
